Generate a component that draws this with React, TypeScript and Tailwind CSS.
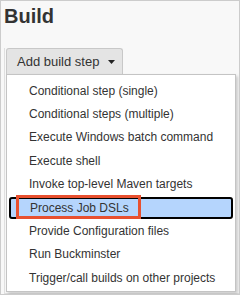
import React from "react";

const items = [
  "Conditional step (single)",
  "Conditional steps (multiple)",
  "Execute Windows batch command",
  "Execute shell",
  "Invoke top-level Maven targets",
  "Process Job DSLs",
  "Provide Configuration files",
  "Run Buckminster",
  "Trigger/call builds on other projects",
];

export default function App() {
  return (
    <div
      className="flex flex-col w-[240px] h-[295px] overflow-hidden border border-[#cccccc] bg-[#f8f8f8] text-[#333333]"
      style={{ fontFamily: '"Liberation Sans", Arial, sans-serif' }}
    >
      <h1 className="pl-[3px] pt-[1px] text-[20px] leading-[28px] font-bold">Build</h1>
      <div className="mt-[18px] ml-[3px] flex flex-col border-l border-b border-[#e0e0e0] pb-[1px]">
        <div className="ml-[1px] w-[117px] h-[26px] flex items-center rounded-t-[3px] border border-b-0 border-[#c8c8c8] bg-[#e4e4e4] pl-[10px] text-[13px]">
          <span>Add build step</span>
          <svg width="7" height="4" viewBox="0 0 7 4" className="ml-[9px] mt-[1px]">
            <path d="M0 0 L7 0 L3.5 4 Z" fill="#222" />
          </svg>
        </div>
        <div className="ml-[1px] w-[230px] h-[218px] flex flex-col border border-[#c4c4c4] bg-white pt-[4px] shadow-[2px_2px_3px_rgba(0,0,0,0.18)]">
          {items.map((t) =>
            t === "Process Job DSLs" ? (
              <div key={t} className="relative h-[23.4px] flex items-center px-[2px]">
                <div className="w-full h-[22px] flex items-center rounded-[3px] border-2 border-black bg-[#b5d5fd] pl-[19px] text-[12px]">
                  {t}
                </div>
                <div className="absolute left-[9px] top-[-1px] w-[125px] h-[24px] border-[3px] border-[#e8502f]" />
              </div>
            ) : (
              <div key={t} className="h-[23.4px] flex items-center pl-[22px] text-[12px] whitespace-nowrap">
                {t}
              </div>
            )
          )}
        </div>
      </div>
    </div>
  );
}
